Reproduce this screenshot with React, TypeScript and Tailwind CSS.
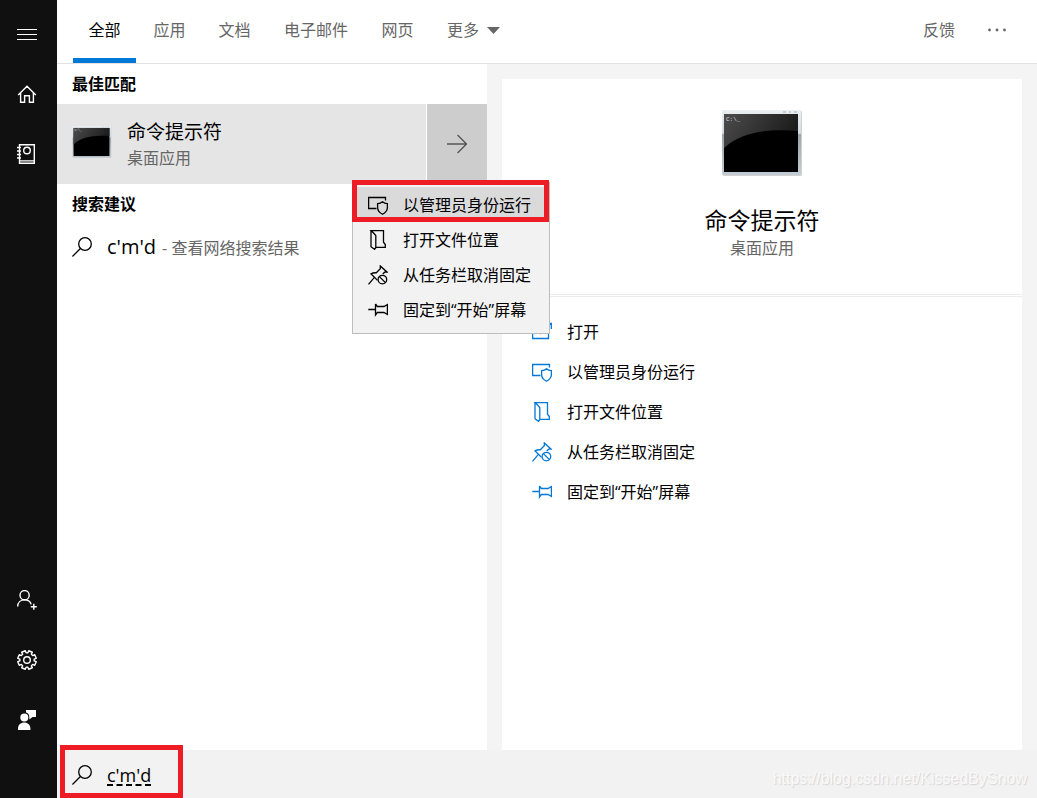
import { useState, type ReactNode } from 'react';

type IconName = 'open' | 'admin' | 'folder' | 'unpin' | 'pin';

const TABS = ['全部', '应用', '文档', '电子邮件', '网页'];

const ACTIONS: { icon: IconName; label: string }[] = [
  { icon: 'open', label: '打开' },
  { icon: 'admin', label: '以管理员身份运行' },
  { icon: 'folder', label: '打开文件位置' },
  { icon: 'unpin', label: '从任务栏取消固定' },
  { icon: 'pin', label: '固定到“开始”屏幕' },
];

// outline of a cog with eight teeth, notch at the top
const gearPath = () => {
  const points: string[] = [];
  for (let i = 0; i < 8; i++) {
    const mid = i * 45 + 22.5;
    const corners: [number, number][] = [
      [mid - 15, 7.2],
      [mid - 12, 9.4],
      [mid + 12, 9.4],
      [mid + 15, 7.2],
    ];
    corners.forEach(([deg, r]) => {
      const a = ((deg - 90) * Math.PI) / 180;
      points.push(`${(10 + r * Math.cos(a)).toFixed(2)} ${(10 + r * Math.sin(a)).toFixed(2)}`);
    });
  }
  return `M${points.join('L')}Z`;
};

function Glyph({ children }: { children: ReactNode }) {
  return (
    <svg
      aria-hidden="true"
      viewBox="0 0 20 20"
      className="size-5 shrink-0"
      fill="none"
      stroke="currentColor"
      strokeWidth="1.3"
    >
      {children}
    </svg>
  );
}

function ActionIcon({ name }: { name: IconName }) {
  return (
    <Glyph>
      {name === 'open' && <path d="M9 3.5H.6V16.5H16.5V10M8 12L19 1.5M12.5 1.5H19.3V7" />}
      {name === 'admin' && (
        <>
          <path d="M8.5 13.5H.6V2.5H17.5V5.5" />
          <path d="M14.5 6.8C13 8.1 11.4 8.6 9.6 8.7V12.4C9.6 15.4 11.5 17.6 14.5 19.2C17.5 17.6 19.4 15.4 19.4 12.4V8.7C17.6 8.6 16 8.1 14.5 6.8Z" />
        </>
      )}
      {name === 'folder' && (
        <path d="M3 .6V16.7L6.5 19.3L7.8 17.8V5.5L5.8 3.2L3 .6H15.5V12.2L17.3 14.5V17.3H8" />
      )}
      {name === 'unpin' && (
        <>
          <path d="M9.5 15.4L3 8.8C4.8 7.8 6.5 7.6 8.3 7.8L12.3 3.8V.9L19.2 7.2H16.6L14.8 9M6.4 12.4L.5 19.3" />
          <circle cx="14.4" cy="14.6" r="4.3" />
          <path d="M11.4 11.6L17.4 17.6" />
        </>
      )}
      {name === 'pin' && (
        <path d="M.3 9.5H7M7.5 4V15L9.3 12.5H16L19.4 14.5V4.5L16 6.5H9.3L7.5 4" />
      )}
    </Glyph>
  );
}

function SearchIcon() {
  return (
    <Glyph>
      <circle cx="13" cy="7" r="6.3" />
      <path d="M8.4 11.5L.4 19.5" />
    </Glyph>
  );
}

function TerminalIcon({ id, className }: { id: string; className: string }) {
  return (
    <svg aria-hidden="true" viewBox="0 0 80 66" className={className}>
      <defs>
        <linearGradient id={`${id}-frame`} x1="0" y1="0" x2="0" y2="1">
          <stop offset="0" stopColor="#e9eef2" />
          <stop offset="0.36" stopColor="#d5dade" />
          <stop offset="0.37" stopColor="#9ba5ae" />
          <stop offset="1" stopColor="#c3ccd4" />
        </linearGradient>
        <linearGradient id={`${id}-gloss`} x1="0" y1="0" x2="1" y2="0.3">
          <stop offset="0" stopColor="#4c4c4c" />
          <stop offset="1" stopColor="#1c1c1c" />
        </linearGradient>
      </defs>
      <rect x="1" y="1" width="79" height="65" rx="1" fill="#d2d2d2" />
      <rect x="0" y="0" width="79" height="65" rx="1" fill={`url(#${id}-frame)`} />
      <rect x="2" y="4" width="74" height="58" fill="#000" />
      <path d="M2 4H76V21C44 18 18 23 2 38Z" fill={`url(#${id}-gloss)`} />
      <path d="M61 2H64M67 2H69M72 2H75" stroke="#a9b0b6" />
      <text x="4" y="11" fontSize="6" fontFamily="Liberation Mono, monospace" fill="#ddd">
        C:\_
      </text>
    </svg>
  );
}

function SidebarButton({ label, children }: { label: string; children: ReactNode }) {
  return (
    <button type="button" aria-label={label} className="flex h-15 w-full items-center pl-[17px]">
      <Glyph>{children}</Glyph>
    </button>
  );
}

function Sidebar() {
  return (
    <aside className="flex w-[57px] shrink-0 flex-col justify-between bg-[#101010] pt-1 pb-12 text-white">
      <div>
        <SidebarButton label="菜单">
          <path d="M0 5.5H20M0 10.5H20M0 15.5H20" strokeWidth="1" />
        </SidebarButton>
        <SidebarButton label="主页">
          <path d="M1.2 11L10 2.2L18.8 11M3.6 9V18.3H7.6V11.8H12.4V18.3H16.4V9" strokeWidth="1.4" />
        </SidebarButton>
        <SidebarButton label="笔记本">
          <path d="M2.5 .7H17.3V19.3H2.5ZM3 16.9H17M0 3.5H4M0 7H4M0 10.5H4M0 14H4" strokeWidth="1.4" />
          <circle cx="10" cy="6.5" r="3.3" strokeWidth="1.4" />
        </SidebarButton>
      </div>
      <div>
        <SidebarButton label="登录">
          <circle cx="7.6" cy="5.2" r="4.6" strokeWidth="1.4" />
          <path d="M.7 16.5C.7 12.6 3.6 9.9 7.6 9.9C10.8 9.9 13.4 11.6 14.2 14.4M16.8 13.8V19.8M13.8 16.8H19.8" strokeWidth="1.4" />
        </SidebarButton>
        <SidebarButton label="设置">
          <path d={gearPath()} strokeWidth="1.4" strokeLinejoin="round" />
          <circle cx="10" cy="10" r="3.3" strokeWidth="1.4" />
        </SidebarButton>
        <SidebarButton label="反馈中心">
          <g fill="currentColor" stroke="none">
            <circle cx="7.3" cy="7.5" r="4" />
            <path d="M1 20V18.5C1 14.6 3.8 12.4 7.2 12.4S13.4 14.6 13.4 18.5V20Z" />
            <path d="M9 0H19V7H15.5L12.3 9.4V7C12.3 4.5 11 3 9 2.6Z" />
          </g>
        </SidebarButton>
      </div>
    </aside>
  );
}

function ContextMenu() {
  return (
    <div className="absolute top-[76px] left-[295px] z-10 pt-0.5">
      <ul role="menu" className="w-[198px] border border-[#bdbdbd] bg-[#f2f2f2] pt-1 pb-1.5">
        {ACTIONS.slice(1).map((action) => (
          <li key={action.icon} role="none">
            <button
              type="button"
              role="menuitem"
              className={`flex h-[35px] w-full items-center gap-[15px] pl-[15px] whitespace-nowrap ${
                action.icon === 'admin' ? 'bg-[#dadada]' : ''
              }`}
            >
              <ActionIcon name={action.icon} />
              {action.label}
            </button>
          </li>
        ))}
      </ul>
      <div className="pointer-events-none absolute top-0 left-0 h-[42px] w-[197px] border-5 border-[#ee1c24]" />
    </div>
  );
}

function Results() {
  return (
    <section className="w-[430px] shrink-0 bg-white">
      <h2 className="flex h-10 items-center pl-[15px] font-bold">最佳匹配</h2>
      <div className="relative flex h-20">
        <button type="button" className="flex flex-1 items-center gap-[15px] bg-[#e5e5e5] pl-[15px] text-left">
          <TerminalIcon id="small" className="mb-1 h-8 w-10" />
          <span className="flex flex-col">
            <span className="text-[19px] leading-7">命令提示符</span>
            <span className="leading-6 text-[#666]">桌面应用</span>
          </span>
        </button>
        <button
          type="button"
          aria-label="展开"
          className="flex w-[61px] items-center border-l border-white bg-[#cdcdcd] pl-5 text-[#555]"
        >
          <Glyph>
            <path d="M0 10H19.5M10.5 1L19.5 10L10.5 19" strokeWidth="1.3" />
          </Glyph>
        </button>
        <ContextMenu />
      </div>
      <h2 className="flex h-10 items-center pl-[15px] font-bold">搜索建议</h2>
      <button type="button" className="flex h-[46px] w-full items-center gap-[15px] pl-[15px]">
        <SearchIcon />
        <span className="flex items-baseline gap-1.5">
          <span className="text-[20px] leading-7">c'm'd</span>
          <span className="text-[#666]">- 查看网络搜索结果</span>
        </span>
      </button>
    </section>
  );
}

function Preview() {
  return (
    <section className="flex flex-1 flex-col bg-[#f4f4f4] px-[15px] pt-[15px]">
      <div className="flex-1 bg-white">
        <div className="flex h-[218px] flex-col items-center border-b-3 border-double border-[#ececec] pt-[31px]">
          <TerminalIcon id="large" className="h-[66px] w-20" />
          <h1 className="mt-7 text-[23px] leading-8">命令提示符</h1>
          <p className="leading-6 text-[#666]">桌面应用</p>
        </div>
        <ul className="pt-[15px]">
          {ACTIONS.map((action) => (
            <li key={action.icon}>
              <button type="button" className="flex h-10 w-full items-center gap-[15px] pl-[30px]">
                <span className="text-[#0078d7]">
                  <ActionIcon name={action.icon} />
                </span>
                {action.label}
              </button>
            </li>
          ))}
        </ul>
      </div>
    </section>
  );
}

export default function App() {
  const [tab, setTab] = useState('全部');
  const [query, setQuery] = useState("c'm'd");

  return (
    <div className="flex min-h-screen bg-white font-['Open_Sans','Noto_Sans_CJK_SC',sans-serif] text-base text-black">
      <Sidebar />
      <div className="flex flex-1 flex-col">
        <header className="flex h-16 justify-between border-b border-[#e3e3e3] pr-[30px] pl-4 text-[#666]">
          <nav className="flex gap-0.5">
            {TABS.map((name) => (
              <button
                key={name}
                type="button"
                onClick={() => setTab(name)}
                className={`border-b-5 px-[15px] pt-0.5 ${
                  name.length > 2 ? 'w-24' : 'w-[63px]'
                } ${tab === name ? 'border-[#0078d7] text-black' : 'border-transparent'}`}
              >
                {name}
              </button>
            ))}
            <button type="button" className="flex items-center gap-2 border-b-5 border-transparent px-4 pt-0.5">
              更多
              <svg aria-hidden="true" viewBox="0 0 13 7" className="h-[7px] w-[13px]">
                <path d="M0 0H13L6.5 7Z" fill="currentColor" />
              </svg>
            </button>
          </nav>
          <div className="flex items-center gap-8 border-b-5 border-transparent pt-0.5">
            <button type="button">反馈</button>
            <button type="button" aria-label="更多选项">
              <Glyph>
                <g fill="currentColor" stroke="none">
                  <circle cx="2.5" cy="10" r="1.4" />
                  <circle cx="10" cy="10" r="1.4" />
                  <circle cx="17.5" cy="10" r="1.4" />
                </g>
              </Glyph>
            </button>
          </div>
        </header>
        <main className="flex flex-1">
          <Results />
          <Preview />
        </main>
        <footer className="relative flex h-12 items-center justify-between bg-[#f2f2f2] pr-2.5 pl-[15px]">
          <label className="flex items-center gap-[15px] pt-0.5">
            <SearchIcon />
            <input
              type="text"
              aria-label="搜索"
              value={query}
              onChange={(e) => setQuery(e.target.value)}
              className="w-60 bg-transparent text-[18px] underline decoration-dashed decoration-2 underline-offset-3 outline-none"
            />
          </label>
          <span className="pt-2.5 font-['Liberation_Sans',sans-serif] text-[16px] text-[#f9f9f9] [text-shadow:1px_1px_1px_#d4d4d4]">
            https://blog.csdn.net/KissedBySnow
          </span>
          <div className="pointer-events-none absolute bottom-0 left-[3px] h-[53px] w-[123px] border-5 border-[#ee1c24]" />
        </footer>
      </div>
    </div>
  );
}
